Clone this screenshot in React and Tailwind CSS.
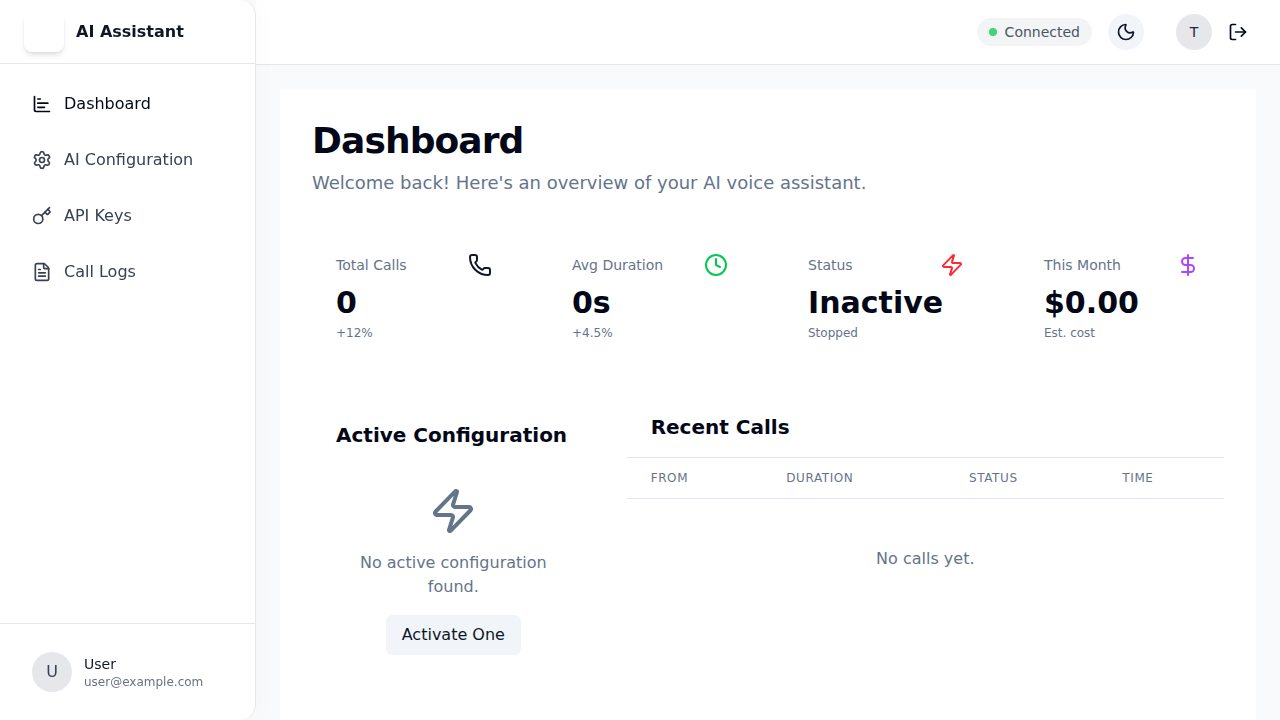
import React from "react";
import { ChartBar, Settings, Key, FileText, Moon, LogOut, Phone, Clock, Zap, DollarSign } from "lucide-react";

const navItems = [
  { label: "Dashboard", icon: ChartBar, active: true },
  { label: "AI Configuration", icon: Settings },
  { label: "API Keys", icon: Key },
  { label: "Call Logs", icon: FileText },
];

const stats = [
  { label: "Total Calls", value: "0", note: "+12%", icon: Phone, color: "text-[#0f172a]" },
  { label: "Avg Duration", value: "0s", note: "+4.5%", icon: Clock, color: "text-green-500" },
  { label: "Status", value: "Inactive", note: "Stopped", icon: Zap, color: "text-[#fb2c36]" },
  { label: "This Month", value: "$0.00", note: "Est. cost", icon: DollarSign, color: "text-purple-500" },
];

function Sidebar() {
  return (
    <aside className="relative z-10 flex h-full w-64 shrink-0 flex-col rounded-r-2xl border-r border-gray-200 bg-white shadow-[4px_0_24px_rgba(0,0,0,0.02)] will-change-transform">
      <div className="flex h-16 shrink-0 items-center gap-3 border-b border-gray-200 px-6">
        <div className="size-10 rounded-lg bg-white shadow-md" />
        <span className="font-bold text-gray-900">AI Assistant</span>
      </div>
      <nav className="flex flex-1 flex-col gap-2 p-4">
        {navItems.map(({ label, icon: Icon, active }) => (
          <a key={label} className={`flex h-12 items-center gap-3 px-4 ${active ? "text-[#020817]" : "text-gray-700"}`}>
            <Icon className="size-5" />
            <span>{label}</span>
          </a>
        ))}
      </nav>
      <div className="border-t border-gray-200 p-4">
        <div className="flex h-16 items-center gap-3 px-4">
          <div className="flex size-10 items-center justify-center rounded-full bg-gray-200 text-gray-700">U</div>
          <div>
            <p className="text-sm text-gray-900">User</p>
            <p className="text-xs text-gray-500">user@example.com</p>
          </div>
        </div>
      </div>
    </aside>
  );
}

function Header() {
  return (
    <header className="flex h-[65px] shrink-0 items-center justify-end border-b border-gray-200 bg-white px-6">
      <div className="flex items-center gap-2 rounded-full bg-gray-100 px-3 py-1 text-sm text-gray-600">
        <span className="size-2 rounded-full bg-[#3dd57a]" />
        Connected
      </div>
      <button className="ml-4 flex size-9 items-center justify-center rounded-full bg-[#f1f5f9] text-[#0f172a]">
        <Moon className="size-5" />
      </button>
      <div className="ml-8 flex size-9 items-center justify-center rounded-full bg-gray-200 text-sm text-gray-800">T</div>
      <button className="ml-2 flex size-9 items-center justify-center text-[#020817]">
        <LogOut className="size-5" />
      </button>
    </header>
  );
}

export default function App() {
  return (
    <div className="flex h-screen overflow-hidden bg-[#f9fafc] font-['DejaVu_Sans',sans-serif]">
      <Sidebar />
      <div className="flex min-w-0 flex-1 flex-col">
        <Header />
        <main className="flex-1 overflow-hidden px-6 pt-6">
          <div className="h-full bg-white p-8 text-[#020817]">
            <h1 className="text-4xl font-bold tracking-tight">Dashboard</h1>
            <p className="mt-2 text-lg text-[#64748b]">Welcome back! Here's an overview of your AI voice assistant.</p>

            <div className="mt-8 grid grid-cols-4 gap-8">
              {stats.map(({ label, value, note, icon: Icon, color }) => (
                <div key={label} className="p-6">
                  <div className="flex items-center justify-between">
                    <span className="text-sm text-[#64748b]">{label}</span>
                    <Icon className={`size-6 ${color}`} />
                  </div>
                  <p className="mt-2 text-3xl font-bold">{value}</p>
                  <p className="mt-1 text-xs text-[#64748b]">{note}</p>
                </div>
              ))}
            </div>

            <div className="mt-8 grid grid-cols-3 gap-8">
              <section className="p-6">
                <h2 className="text-xl font-semibold">Active Configuration</h2>
                <div className="flex flex-col items-center gap-4 pt-[38px] text-center text-[#64748b]">
                  <Zap className="size-12" />
                  <p>No active configuration found.</p>
                  <button className="rounded-md bg-[#f1f5f9] px-4 py-2 text-[#0f172a]">Activate One</button>
                </div>
              </section>
              <section className="col-span-2">
                <h2 className="px-6 py-4 text-xl font-semibold">Recent Calls</h2>
                <table className="w-full border-t border-[#e2e8f0]">
                  <thead>
                    <tr className="border-b border-[#e2e8f0] text-left text-xs tracking-wider text-[#64748b] uppercase">
                      <th className="px-6 py-3 font-medium">From</th>
                      <th className="px-6 py-3 font-medium">Duration</th>
                      <th className="px-6 py-3 font-medium">Status</th>
                      <th className="px-6 py-3 font-medium">Time</th>
                    </tr>
                  </thead>
                  <tbody>
                    <tr>
                      <td colSpan={4} className="px-6 py-12 text-center text-[#64748b]">No calls yet.</td>
                    </tr>
                  </tbody>
                </table>
              </section>
            </div>
          </div>
        </main>
      </div>
    </div>
  );
}
